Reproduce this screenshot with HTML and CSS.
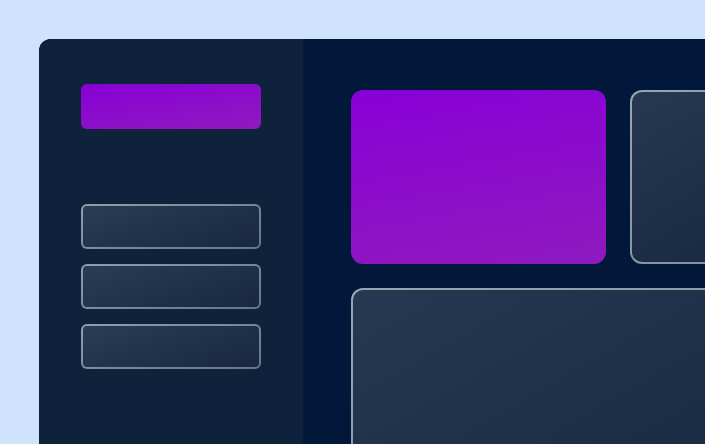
FILE: index.html
```html
<!DOCTYPE html>
<html>
<head>
<meta charset="utf-8">
<link rel="stylesheet" href="styles.css">
</head>
<body>
<div class="app">
  <aside class="sidebar">
    <div class="logo"></div>
    <nav class="nav">
      <div class="nav-item"></div>
      <div class="nav-item"></div>
      <div class="nav-item"></div>
    </nav>
  </aside>
  <main class="main">
    <div class="grid">
      <div class="card card-purple"></div>
      <div class="card card-glass"></div>
      <div class="card card-glass card-wide"></div>
    </div>
  </main>
</div>
</body>
</html>
```
FILE: styles.css
```css
html, body {
  margin: 0;
  padding: 0;
  height: 100%;
  overflow: hidden;
}
body {
  background: #cfe3fd;
  padding: 39px 0 0 39px;
  box-sizing: border-box;
  font-family: "Inter", sans-serif;
}
.app {
  display: flex;
  width: 1000px;
  height: 800px;
  border-radius: 12px 0 0 0;
  overflow: hidden;
  background: #01183a;
}
.sidebar {
  width: 264px;
  flex: none;
  background: #0f223b;
  padding: 45px 42px;
  box-sizing: border-box;
}
.logo {
  height: 45px;
  border-radius: 6px;
  background: linear-gradient(170deg, #8800d6, #8f1abf);
}
.nav {
  margin-top: 75px;
  display: flex;
  flex-direction: column;
  gap: 15px;
}
.nav-item {
  height: 45px;
  box-sizing: border-box;
  border-radius: 6px;
  border: 2px solid transparent;
  background:
    linear-gradient(160deg, #2a3d55, #17283f) padding-box,
    linear-gradient(160deg, #929dab, #66738a) border-box;
}
.main {
  flex: 1;
  padding: 51px 48px;
}
.grid {
  display: grid;
  grid-template-columns: 255px 255px;
  grid-template-rows: 174px 300px;
  gap: 24px;
}
.card {
  border-radius: 12px;
  box-sizing: border-box;
}
.card-purple {
  background: linear-gradient(170deg, #8800d6, #8f1abf);
}
.card-glass {
  border: 2px solid transparent;
  background:
    linear-gradient(150deg, #263950, #13243e) padding-box,
    linear-gradient(150deg, #9aa4b2, #7d889a) border-box;
}
.card-wide {
  grid-column: 1 / 3;
}
```
